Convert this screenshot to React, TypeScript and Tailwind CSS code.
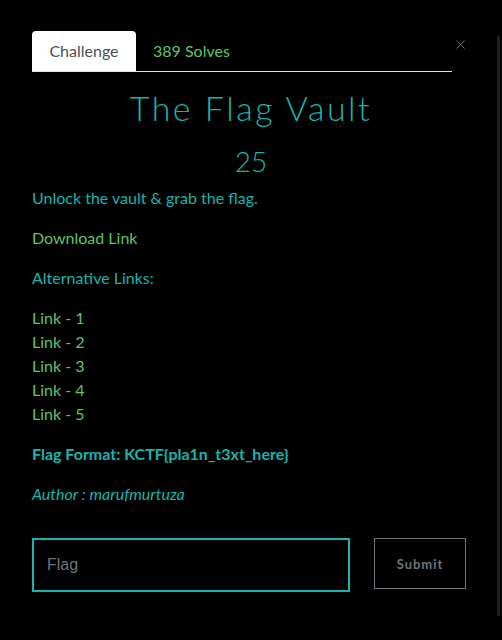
import { X } from "lucide-react";

const links = ["Link - 1", "Link - 2", "Link - 3", "Link - 4", "Link - 5"];

export default function App() {
  return (
    <div className="relative h-[640px] w-[502px] overflow-hidden bg-black font-['Lato','Noto_Sans',sans-serif] text-[16px] leading-6">
      <div className="absolute right-[2px] top-[36px] h-[580px] w-[3px] bg-[#1a1d21]" />
      <div className="px-[32px] pt-[31px]">
        <div className="flex items-end">
          <div className="flex w-[420px] border-b border-[#dee2e6]">
            <button className="h-[40px] w-[104px] rounded-t-[4px] bg-white text-[16px] text-[#495057]">Challenge</button>
            <button className="h-[40px] px-[17px] text-[16px] text-[#5cc46b]">389 Solves</button>
          </div>
          <button className="mb-[20px] ml-[1px] text-[#6c757d]" aria-label="Close">
            <X size={15} strokeWidth={1.5} />
          </button>
        </div>

        <h1 className="mt-[16px] text-center text-[34px] font-light leading-[40px] tracking-[2.5px] text-[#16b5ad]">The Flag Vault</h1>
        <div className="mt-[16px] text-center text-[28px] font-light leading-[34px] text-[#16b5ad]">25</div>

        <div className="mt-[8px]">
          <p className="mb-[16px] text-[#16b5ad]">Unlock the vault &amp; grab the flag.</p>
          <p className="mb-[16px] text-[#5cc46b]">Download Link</p>
          <p className="mb-[16px] text-[#16b5ad]">Alternative Links:</p>
          <div className="mb-[16px] text-[#5cc46b]">
            {links.map((l) => (
              <div key={l}>{l}</div>
            ))}
          </div>
          <p className="mb-[16px] font-bold text-[#16b5ad]">Flag Format: KCTF{"{"}pla1n_t3xt_here{"}"}</p>
          <p className="italic text-[#16b5ad]">Author : marufmurtuza</p>
        </div>

        <div className="mt-[32px] flex items-start">
          <input
            className="h-[54px] w-[318px] border-2 border-[#16b5ad] bg-black px-[13px] font-['Liberation_Sans',sans-serif] text-[16px] text-white outline-none placeholder:text-[#6c757d]"
            placeholder="Flag"
          />
          <button className="ml-[24px] h-[51px] w-[92px] border border-[#6c757d] text-[13px] font-bold tracking-[1px] text-[#6c757d]">Submit</button>
        </div>
      </div>
    </div>
  );
}
